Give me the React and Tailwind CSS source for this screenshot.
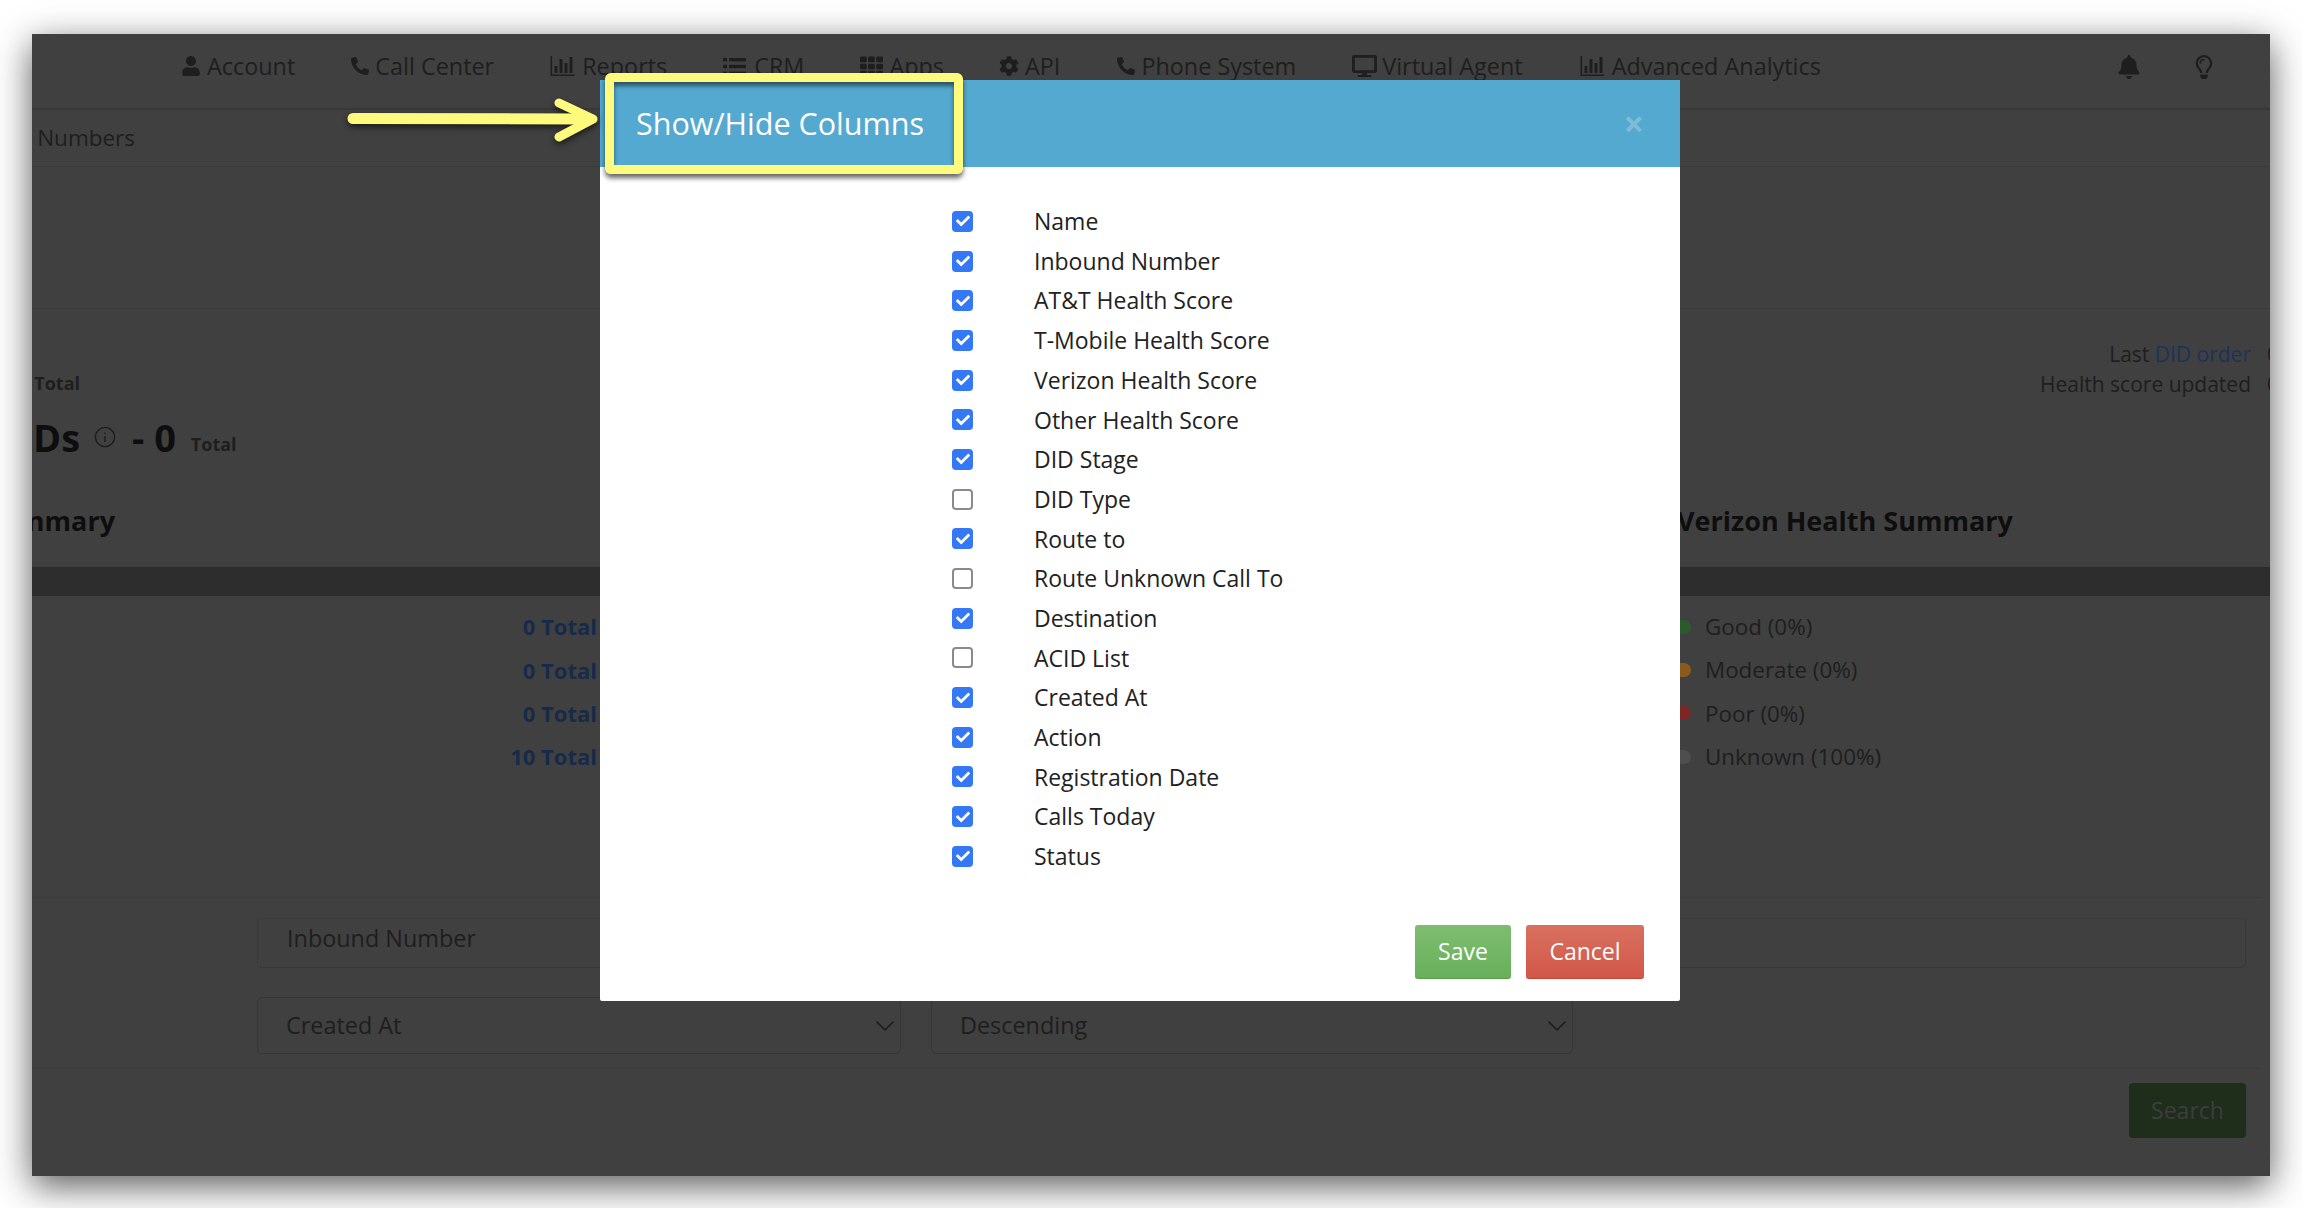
import { FaUser, FaPhoneAlt, FaTh, FaCog, FaDesktop, FaBell, FaRegLightbulb, FaCheck } from "react-icons/fa";
import { ChevronDown } from "lucide-react";

const BarIcon = ({ className }) => (
  <svg viewBox="0 0 24 20" className={className} fill="currentColor">
    <path d="M0 0h1.6v18.4H24V20H0z" />
    <rect x="4" y="10" width="3" height="7" />
    <rect x="9" y="3" width="3" height="14" />
    <rect x="14" y="7" width="3" height="10" />
    <rect x="19" y="1" width="3" height="16" />
  </svg>
);

const ListIcon = ({ className }) => (
  <svg viewBox="0 0 23 19" className={className} fill="currentColor">
    <rect x="0" y="1" width="4" height="3.4" />
    <rect x="6" y="1" width="17" height="3.4" />
    <rect x="0" y="7.8" width="4" height="3.4" />
    <rect x="6" y="7.8" width="17" height="3.4" />
    <rect x="0" y="14.6" width="4" height="3.4" />
    <rect x="6" y="14.6" width="17" height="3.4" />
  </svg>
);

const navItems = [
  { label: "Account", Icon: FaUser, icon: "w-[18px] h-[20px]", gap: "gap-[7px]", ml: "ml-0" },
  { label: "Call Center", Icon: FaPhoneAlt, icon: "w-[18px] h-[18px]", gap: "gap-[6px]", ml: "ml-[56px]" },
  { label: "Reports", Icon: BarIcon, icon: "w-[25px] h-[20px]", gap: "gap-[7px]", ml: "ml-[56px]" },
  { label: "CRM", Icon: ListIcon, icon: "w-[23px] h-[19px]", gap: "gap-[8px]", ml: "ml-[56px]" },
  { label: "Apps", Icon: FaTh, icon: "w-[23px] h-[23px]", gap: "gap-[6px]", ml: "ml-[56px]" },
  { label: "API", Icon: FaCog, icon: "w-[20px] h-[20px]", gap: "gap-[6px]", ml: "ml-[55px]" },
  { label: "Phone System", Icon: FaPhoneAlt, icon: "w-[18px] h-[18px]", gap: "gap-[6px]", ml: "ml-[57px]" },
  { label: "Virtual Agent", Icon: FaDesktop, icon: "w-[25px] h-[24px]", gap: "gap-[5px]", ml: "ml-[56px]" },
  { label: "Advanced Analytics", Icon: BarIcon, icon: "w-[25px] h-[20px]", gap: "gap-[7px]", ml: "ml-[57px]" },
];

const columns = [
  ["Name", true],
  ["Inbound Number", true],
  ["AT&T Health Score", true],
  ["T-Mobile Health Score", true],
  ["Verizon Health Score", true],
  ["Other Health Score", true],
  ["DID Stage", true],
  ["DID Type", false],
  ["Route to", true],
  ["Route Unknown Call To", false],
  ["Destination", true],
  ["ACID List", false],
  ["Created At", true],
  ["Action", true],
  ["Registration Date", true],
  ["Calls Today", true],
  ["Status", true],
];

const healthRows = [
  { total: "0 Total", label: "Good (0%)", dot: "bg-[#2c5a2c]" },
  { total: "0 Total", label: "Moderate (0%)", dot: "bg-[#8a5a1c]" },
  { total: "0 Total", label: "Poor (0%)", dot: "bg-[#7c2626]" },
  { total: "10 Total", label: "Unknown (100%)", dot: "bg-[#4e4e4e]" },
];

const SelectBox = ({ label, className }) => (
  <div className={`h-[57px] flex items-center justify-between pl-[28px] border border-[#363636] rounded-[5px] ${className}`}>
    <span>{label}</span>
    <ChevronDown className="w-[32px] h-[32px] -mr-[1px] text-[#1c1c1c]" strokeWidth={1.3} />
  </div>
);

export default function App() {
  return (
    <div className="w-[2302px] h-[1208px] bg-white pt-[34px] pl-[32px] overflow-hidden font-['Open_Sans',sans-serif]">
      <div className="relative w-[2238px] h-[1142px] bg-[#404040] text-[23.4px] text-[#1e1e1e] shadow-[0_10px_34px_rgba(0,0,0,0.65)]">
        <div className="w-full h-full overflow-hidden">
          {/* Top nav */}
          <div className="h-[76px] border-b-2 border-[#383838] flex items-center pl-[150px] pr-[56px] pb-[9px]">
            {navItems.map(({ label, Icon, icon, gap, ml }) => (
              <div key={label} className={`flex items-center ${gap} ${ml}`}>
                <Icon className={icon} />
                <span>{label}</span>
              </div>
            ))}
            <FaBell className="ml-auto w-[22px] h-[24px]" />
            <FaRegLightbulb className="ml-[54px] w-[20px] h-[24px]" />
          </div>

          {/* Breadcrumb */}
          <div className="h-[57px] border-b border-[#3b3b3b] flex items-center -ml-[69px] text-[22.5px]">
            <span>Virtual Numbers</span>
          </div>

          <div className="h-[142px] border-b border-[#3b3b3b]" />

          {/* Summary header */}
          <div className="h-[258px] flex justify-between">
            <div className="pt-[58px]">
              <div className="font-bold text-[18px] leading-[32px] -ml-[150px] w-[200px] text-right pr-[2px]">Total</div>
              <div className="flex items-center mt-[15px] h-[46px]">
                <span className="font-bold text-[38px] text-[#0e0e0e] ml-[1px]">Ds</span>
                <svg viewBox="0 0 24 24" className="w-[22px] h-[22px] ml-[14px] text-[#1c1c1c]" fill="none" stroke="currentColor" strokeWidth="1.5">
                  <circle cx="12" cy="12" r="10.5" />
                  <path d="M12 11v6.5M12 7v1.6" />
                </svg>
                <span className="font-bold text-[38px] text-[#0e0e0e] ml-[16px]">- 0</span>
                <span className="font-bold text-[18px] ml-[15px] mt-[14px]">Total</span>
              </div>
              <div className="font-bold text-[27px] text-[#0e0e0e] mt-[41px] leading-[40px] -ml-[140px] w-[223px] text-right">nmary</div>
            </div>
            <div className="flex flex-col">
              <div className="pt-[30px] flex flex-col items-end leading-[30px] text-[21px]">
                <div className="flex">
                  <span>Last <span className="text-[#1c3358]">DID order</span></span>
                  <span className="w-[19px] pl-[16px] overflow-hidden">0</span>
                </div>
                <div className="flex">
                  <span>Health score updated</span>
                  <span className="w-[19px] pl-[16px] overflow-hidden">0</span>
                </div>
              </div>
              <div className="font-bold text-[27px] text-[#0e0e0e] mt-[102px] leading-[40px] w-[593px]">Verizon Health Summary</div>
            </div>
          </div>

          <div className="h-[29px] bg-[#2d2d2d]" />

          {/* Health rows */}
          <div className="h-[302px] border-b border-[#3a3a3a] mr-[8px] pt-[9px] flex justify-between">
            <div className="w-[565px]">
              {healthRows.map((row, i) => (
                <div key={i} className="h-[43.4px] flex items-center justify-end font-bold text-[22px] text-[#172a4a]">
                  {row.total}
                </div>
              ))}
            </div>
            <div className="w-[582px]">
              {healthRows.map((row) => (
                <div key={row.label} className="h-[43.4px] flex items-center gap-[14px] text-[22.4px]">
                  <span className={`w-[11px] h-[14px] rounded-r-full ${row.dot}`} />
                  <span>{row.label}</span>
                </div>
              ))}
            </div>
          </div>

          {/* Filters */}
          <div className="h-[171px] border-b border-[#3a3a3a] mr-[8px] pl-[225px] pr-[16px] pt-[20px]">
            <div className="h-[50px] flex items-center pl-[29px] pb-[8px] border border-[#383838] border-t-[#3d3d3d] rounded-[5px]">Inbound Number</div>
            <div className="flex gap-[30px] mt-[29px]">
              <SelectBox label="Created At" className="w-[644px]" />
              <SelectBox label="Descending" className="w-[642px]" />
            </div>
          </div>

          <div className="flex justify-end pr-[24px] pt-[14px]">
            <div className="w-[117px] h-[55px] rounded-[4px] bg-[#1e2e1b] text-[#3d3d3d] text-[23px] flex items-center justify-center">Search</div>
          </div>
        </div>

        {/* Modal */}
        <div className="absolute left-[568px] top-[46px] w-[1080px] h-[921px] bg-white rounded-[2px] flex flex-col">
          <div className="h-[87px] bg-[#54a9d0] flex items-center justify-between pl-[36px] pr-[36px]">
            <span className="text-[30.5px] text-white">Show/Hide Columns</span>
            <span className="text-[#7fbcd8] text-[36px] font-bold leading-none">×</span>
          </div>
          <div className="pt-[34.5px] pl-[352px] text-[23px]">
            {columns.map(([label, checked]) => (
              <div key={label} className="h-[39.7px] flex items-center gap-[61px] text-[#222]">
                {checked ? (
                  <span className="w-[21px] h-[21px] rounded-[4px] bg-[#3478f6] flex items-center justify-center">
                    <FaCheck className="w-[14px] h-[14px] text-white" />
                  </span>
                ) : (
                  <span className="w-[21px] h-[21px] rounded-[4px] bg-white border-2 border-[#8a8a8a]" />
                )}
                <span>{label}</span>
              </div>
            ))}
          </div>
          <div className="flex justify-end gap-[15px] pr-[36px] mt-[48.5px] text-white text-[23px]">
            <div className="w-[96px] h-[54px] rounded-[3px] bg-gradient-to-b from-[#7ebd70] to-[#67b05a] border-b border-[#5a9e4e] flex items-center justify-center">Save</div>
            <div className="w-[118px] h-[54px] rounded-[3px] bg-gradient-to-b from-[#d9705f] to-[#d1574a] border-b border-[#c9432f] flex items-center justify-center">Cancel</div>
          </div>
        </div>

        {/* Annotation */}
        <div className="absolute left-[573px] top-[39px] w-[358px] h-[101px] border-[9px] border-[#fefb7c] rounded-[6px] shadow-[0_4px_5px_rgba(0,0,0,0.6),inset_0_4px_4px_rgba(0,0,0,0.5)]" />
        <svg className="absolute left-[315px] top-[63px] w-[256px] h-[52px] drop-shadow-[0_3px_3px_rgba(0,0,0,0.6)]" viewBox="0 0 256 52" fill="none" stroke="#fefb7c" strokeLinecap="round" strokeLinejoin="round">
          <path d="M6 21.5 L240 22" strokeWidth="11" />
          <path d="M212 6 L246 22 L212 40" strokeWidth="9" />
        </svg>
      </div>
    </div>
  );
}
